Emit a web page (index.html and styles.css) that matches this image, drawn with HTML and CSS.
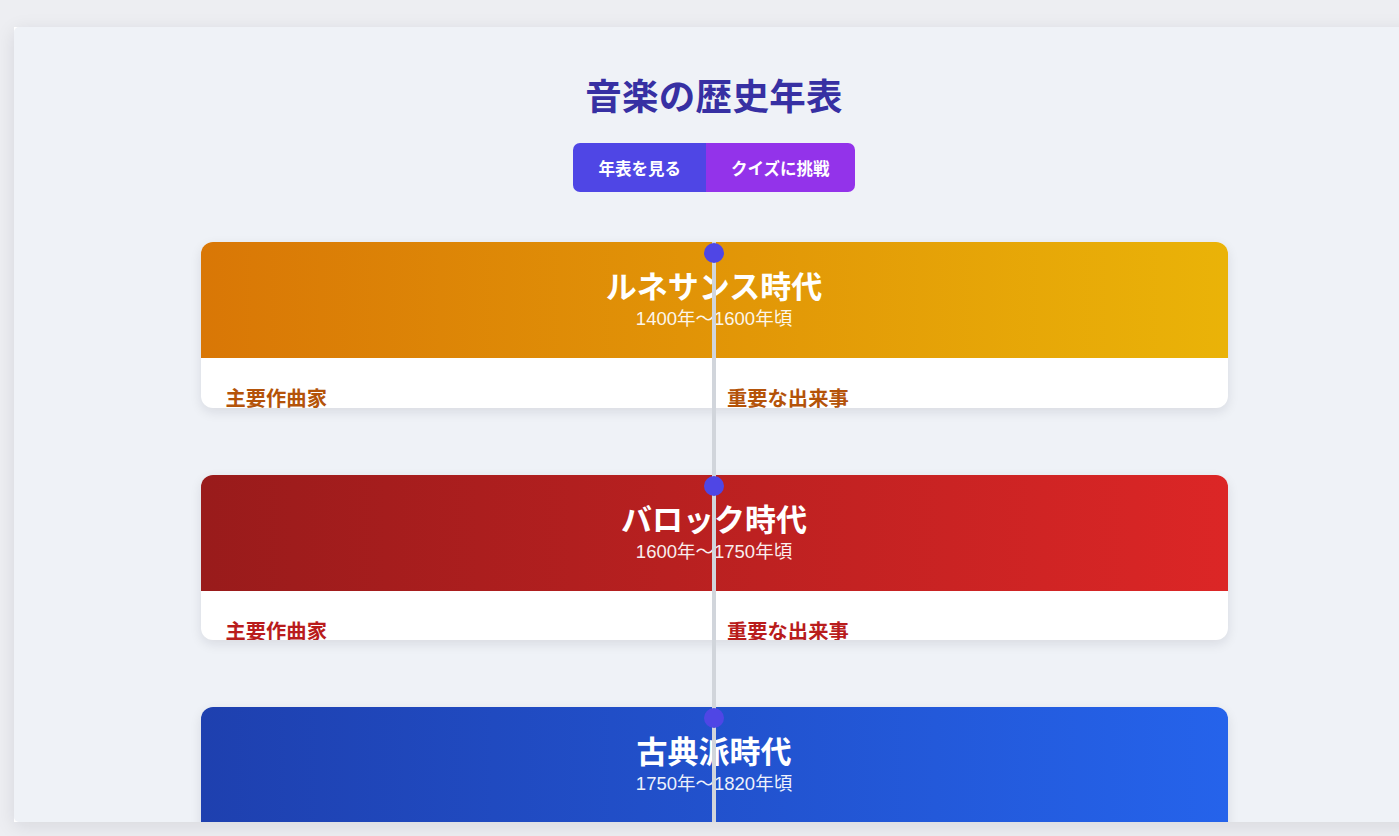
FILE: index.html
```html
<!DOCTYPE html>
<html lang="ja">
<head>
<meta charset="utf-8">
<title>音楽の歴史年表</title>
<link rel="stylesheet" href="styles.css">
</head>
<body>
<div class="frame">
  <div class="page">
    <h1 class="title">音楽の歴史年表</h1>
    <div class="tabs">
      <button class="tab tab-timeline">年表を見る</button>
      <button class="tab tab-quiz">クイズに挑戦</button>
    </div>
    <div class="timeline">
      <div class="era era-renaissance">
        <span class="dot"></span>
        <div class="era-head">
          <h2 class="era-name">ルネサンス時代</h2>
          <p class="era-years">1400年〜1600年頃</p>
        </div>
        <div class="era-body">
          <h3 class="era-sub">主要作曲家</h3>
          <h3 class="era-sub">重要な出来事</h3>
        </div>
      </div>
      <div class="era era-baroque">
        <span class="dot"></span>
        <div class="era-head">
          <h2 class="era-name">バロック時代</h2>
          <p class="era-years">1600年〜1750年頃</p>
        </div>
        <div class="era-body">
          <h3 class="era-sub">主要作曲家</h3>
          <h3 class="era-sub">重要な出来事</h3>
        </div>
      </div>
      <div class="era era-classical">
        <span class="dot"></span>
        <div class="era-head">
          <h2 class="era-name">古典派時代</h2>
          <p class="era-years">1750年〜1820年頃</p>
        </div>
        <div class="era-body">
          <h3 class="era-sub">主要作曲家</h3>
          <h3 class="era-sub">重要な出来事</h3>
        </div>
      </div>
    </div>
  </div>
</div>
</body>
</html>
```

FILE: styles.css
```css
html, body {
  margin: 0;
  padding: 0;
  overflow: hidden;
  height: 836px;
  background: #edeef2;
  font-family: "Noto Sans CJK JP", "Noto Sans", sans-serif;
}

.frame {
  margin: 27px 0 0 14px;
  width: 1400px;
  height: 795px;
  background: #ffffff;
  box-shadow: 0 4px 18px rgba(20, 24, 40, 0.10);
  overflow: hidden;
}

.page {
  height: 100%;
  background: #eff2f7;
  border-radius: 5px;
  padding-top: 48px;
  box-sizing: border-box;
  display: flex;
  flex-direction: column;
  align-items: center;
  overflow: hidden;
}

.page > * {
  flex-shrink: 0;
}

.title {
  margin: 0;
  font-size: 36.5px;
  line-height: 40px;
  font-weight: 700;
  color: #3730a3;
  letter-spacing: 0.3px;
}

.tabs {
  display: flex;
  margin-top: 28px;
  border-radius: 7px;
  overflow: hidden;
}

.tab {
  border: none;
  height: 49px;
  padding: 0 25px;
  font-family: "Noto Sans CJK JP", sans-serif;
  font-size: 16.5px;
  font-weight: 700;
  color: #ffffff;
}

.tab-timeline { background: #4f46e5; }
.tab-quiz { background: #9333ea; }

.timeline {
  position: relative;
  margin-top: 50px;
  width: 1027px;
  display: flex;
  flex-direction: column;
  gap: 67px;
}

.timeline::before {
  content: "";
  position: absolute;
  left: 50%;
  top: 0;
  bottom: -400px;
  width: 4px;
  margin-left: -2px;
  background: #d1d5db;
  z-index: 2;
}

.era {
  position: relative;
  height: 165.5px;
  flex-shrink: 0;
  background: #ffffff;
  border-radius: 12px;
  overflow: hidden;
  box-shadow: 0 4px 12px rgba(15, 23, 42, 0.10);
}

.dot {
  position: absolute;
  left: 50%;
  top: 1px;
  width: 20px;
  height: 20px;
  margin-left: -10px;
  border-radius: 50%;
  background: #4f46e5;
  z-index: 3;
}

.era-head {
  height: 116px;
  box-sizing: border-box;
  padding-top: 22px;
  text-align: center;
  color: #ffffff;
}

.era-renaissance .era-head { background: linear-gradient(90deg, #d97706, #eab308); }
.era-baroque .era-head { background: linear-gradient(90deg, #991b1b, #dc2626); }
.era-classical .era-head { background: linear-gradient(90deg, #1e40af, #2563eb); }

.era-name {
  margin: 0;
  font-size: 31px;
  line-height: 42px;
  font-weight: 700;
}

.era-years {
  margin: 0;
  font-family: "Liberation Sans", "Noto Sans CJK JP", sans-serif;
  font-size: 18.5px;
  line-height: 26px;
  opacity: 0.92;
}

.era-body {
  display: grid;
  grid-template-columns: 1fr 1fr;
  column-gap: 26px;
  padding: 25px 25px 0;
}

.era-sub {
  margin: 0;
  font-size: 20.3px;
  line-height: 28px;
  font-weight: 700;
}

.era-renaissance .era-sub { color: #b45309; }
.era-baroque .era-sub { color: #b91c1c; }
.era-classical .era-sub { color: #1d4ed8; }
```
